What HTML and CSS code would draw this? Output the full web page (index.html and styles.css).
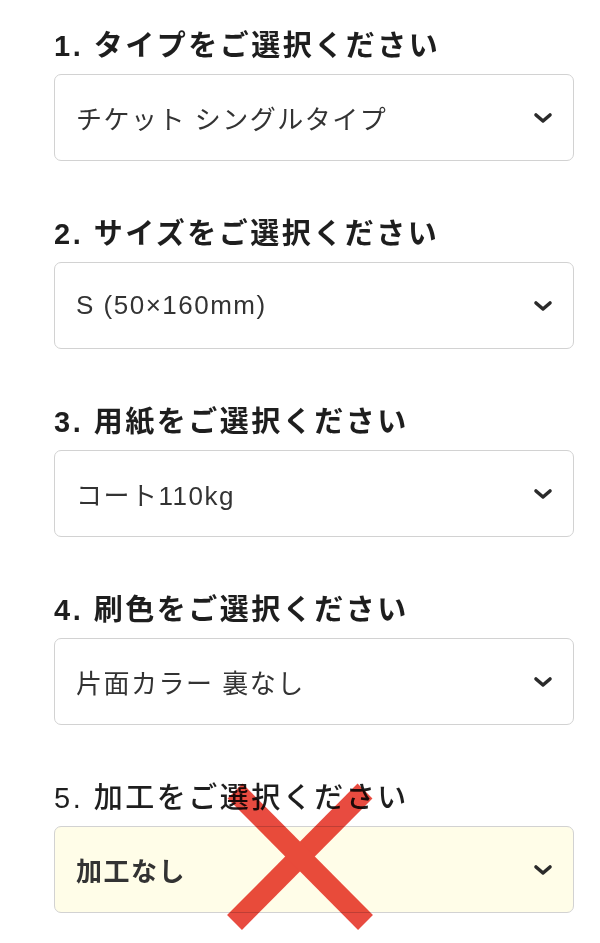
FILE: index.html
```html
<!DOCTYPE html>
<html lang="ja">
<head>
<meta charset="utf-8">
<title>ご注文内容</title>
<link rel="stylesheet" href="styles.css">
</head>
<body>
<main class="order-form">
  <div class="field">
    <div class="field-label">1. タイプをご選択ください</div>
    <div class="select">
      <span class="select-value">チケット シングルタイプ</span>
      <svg class="chevron" viewBox="0 0 20 12" aria-hidden="true"><polyline points="3,3 10,9 17,3"/></svg>
    </div>
  </div>
  <div class="field">
    <div class="field-label">2. サイズをご選択ください</div>
    <div class="select">
      <span class="select-value">S (50×160mm)</span>
      <svg class="chevron" viewBox="0 0 20 12" aria-hidden="true"><polyline points="3,3 10,9 17,3"/></svg>
    </div>
  </div>
  <div class="field">
    <div class="field-label">3. 用紙をご選択ください</div>
    <div class="select">
      <span class="select-value">コート110kg</span>
      <svg class="chevron" viewBox="0 0 20 12" aria-hidden="true"><polyline points="3,3 10,9 17,3"/></svg>
    </div>
  </div>
  <div class="field">
    <div class="field-label">4. 刷色をご選択ください</div>
    <div class="select">
      <span class="select-value">片面カラー 裏なし</span>
      <svg class="chevron" viewBox="0 0 20 12" aria-hidden="true"><polyline points="3,3 10,9 17,3"/></svg>
    </div>
  </div>
  <div class="field field-disabled">
    <div class="field-label">5. 加工をご選択ください</div>
    <div class="select select-highlight">
      <span class="select-value">加工なし</span>
      <svg class="chevron" viewBox="0 0 20 12" aria-hidden="true"><polyline points="3,3 10,9 17,3"/></svg>
    </div>
  </div>

  <!-- cross mark laid over the last option -->
  <svg class="cross" viewBox="0 0 160 155" aria-hidden="true">
    <line x1="14.5" y1="142.5" x2="145" y2="11"/>
    <line x1="15" y1="11" x2="145.5" y2="142.5"/>
  </svg>
</main>
</body>
</html>
```
FILE: styles.css
```css
html, body {
  margin: 0;
  padding: 0;
  background: #ffffff;
}

body {
  font-family: "Liberation Sans", "Noto Sans CJK JP", sans-serif;
  color: #222222;
}

.order-form {
  position: relative;
  padding: 26px 0 0 54px;
  width: 520px;
}

.field {
  margin-bottom: 53px;
}

.field-label {
  height: 40px;
  line-height: 40px;
  margin-bottom: 8px;
  font-size: 29px;
  font-weight: 700;
  letter-spacing: 2.5px;
  color: #1e1e1e;
  white-space: nowrap;
}

.field-disabled .field-label {
  font-weight: 500;
}

.select {
  box-sizing: border-box;
  height: 87px;
  display: flex;
  align-items: center;
  justify-content: space-between;
  padding: 0 20px 0 21px;
  border: 1px solid #d2d2d2;
  border-radius: 7px;
  background: #ffffff;
}

.select-value {
  font-size: 26px;
  letter-spacing: 1.5px;
  color: #333333;
  white-space: nowrap;
}

.select-highlight {
  background: #fffde8;
}

.select-highlight .select-value {
  font-weight: 700;
}

.chevron {
  width: 20px;
  height: 12px;
  flex: none;
}

.chevron polyline {
  fill: none;
  stroke: #2b2b2b;
  stroke-width: 3.6;
  stroke-linecap: round;
  stroke-linejoin: round;
}

.cross {
  position: absolute;
  left: 220px;
  top: 780px;
  width: 160px;
  height: 155px;
  mix-blend-mode: multiply;
}

.cross line {
  stroke: #e84b40;
  stroke-width: 21;
  stroke-linecap: butt;
}
```
